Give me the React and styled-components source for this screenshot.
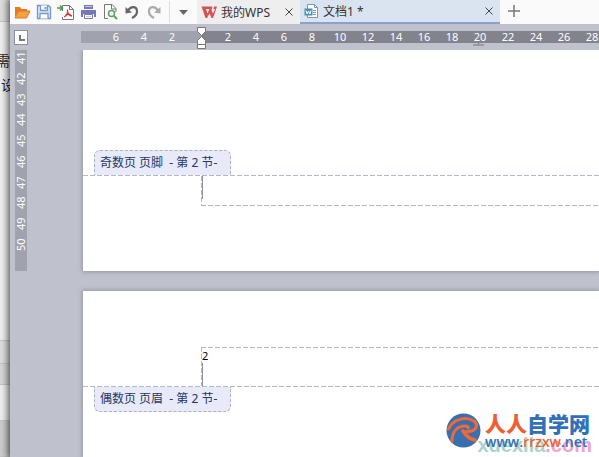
import React from "react";
import styled, { createGlobalStyle } from "styled-components";

const GlobalStyle = createGlobalStyle`
* {
  box-sizing: border-box;
}

body {
  margin: 0;
  font-family: "Noto Sans", "Noto Sans CJK SC", sans-serif;
  font-size: 12px;
  color: #333;
}

button {
  margin: 0;
  padding: 0;
  border: 0;
  background: none;
  font: inherit;
  color: inherit;
}
`;

const dash = direction => `repeating-linear-gradient(
  ${direction}, #b0b9c4 0 5px, transparent 5px 7px
)`;

const Desktop = styled.div`
  position: relative;
  display: flex;
  min-height: 100vh;
  overflow: hidden;
`;

const Behind = styled.div`
  display: flex;
  flex-direction: column;
  flex: 0 0 10px;
  overflow: hidden;
  background: #eee;
`;

const BehindBlock = styled.div`
  flex: ${props => props.$height ? `0 0 ${props.$height}px` : "1"};
  background: ${props => props.$color};
  border-bottom: 1px solid ${props => props.$line || "#c4c4c4"};
`;

const BehindText = styled.div`
  height: 24px;
  padding-left: ${props => props.$indent || 0}px;
  font-size: 14px;
  line-height: 24px;
  white-space: nowrap;
  color: #222;
  direction: ${props => props.$indent ? "ltr" : "rtl"};
`;

const Window = styled.div`
  position: relative;
  display: flex;
  flex-direction: column;
  flex: 1;
  min-width: 0;
  background: #bfc1cc;
  box-shadow: 0 0 7px 2px rgba(0, 0, 0, 0.65);
`;

const TopBar = styled.header`
  display: flex;
  height: 24px;
  overflow: hidden;
  background: #fafafa;
`;

const Tools = styled.div`
  display: flex;
  align-items: center;
  padding-left: 1px;
`;

const ToolButton = styled.button`
  display: flex;
  align-items: center;
  justify-content: center;
  width: 22px;
  height: 22px;
`;

const Divider = styled.div`
  width: 1px;
  height: 22px;
  margin-left: 4px;
  background: #ddd;
`;

const Tab = styled.div`
  display: flex;
  align-items: center;
  width: ${props => props.$active ? 200 : 103}px;
  padding: 0 4px;
  background: ${props => props.$active ? "#dae4f1" : "#eee"};
  border-bottom: ${props => props.$active ? "2px solid #87a3cd" : "0"};
`;

const TabTitle = styled.button`
  display: flex;
  align-items: center;
  flex: 1;
  gap: 4px;
  height: 22px;
  white-space: nowrap;
`;

const IconButton = styled.button`
  display: flex;
  align-items: center;
  justify-content: center;
  width: ${props => props.$wide ? 27 : 14}px;
  height: 22px;
`;

const RulerRow = styled.div`
  position: relative;
  display: flex;
  align-items: center;
  height: 26px;
`;

const CornerButton = styled.button`
  flex: none;
  width: 14px;
  height: 15px;
  margin: 0 53px 0 4px;
  border: 1px solid #8c8e98;
  background: #fff;
`;

const Ruler = styled.div`
  display: flex;
  flex: 1;
  height: 12px;
  overflow: hidden;
  background: #83838e;
  color: #fff;
  font-size: 11px;
  line-height: 12px;
`;

const RulerPart = styled.div`
  display: flex;
  flex: none;
  padding: ${props => props.$margin ? "0 15px 0 21px" : "0 0 0 13px"};
  background: ${props => props.$margin ? "#a0a2ad" : "#83838e"};
`;

const RulerNumber = styled.span`
  width: 28px;
  text-align: center;
`;

const Indent = styled.svg`
  position: absolute;
  left: 186px;
  top: 3px;
`;

const TabStop = styled.svg`
  position: absolute;
  left: 463px;
  top: 19px;
`;

const Workspace = styled.div`
  display: flex;
  flex: 1;
`;

const SideRuler = styled.div`
  display: flex;
  flex-direction: column;
  justify-content: space-between;
  flex: 0 0 12px;
  height: 221px;
  margin-left: 5px;
  padding: 2px 0 20px;
  background: #a0a2ad;
  color: #fff;
  font-size: 11px;
`;

const SideNumber = styled.span`
  display: flex;
  justify-content: center;
  width: 12px;
  height: 12px;
  line-height: 12px;
  writing-mode: vertical-rl;
  transform: rotate(180deg);
`;

const Pages = styled.main`
  display: flex;
  flex-direction: column;
  flex: 1;
  gap: 20px;
  min-width: 0;
  padding-left: 56px;
  overflow: hidden;
`;

const Page = styled.section`
  flex: ${props => props.$last ? "1 0 166px" : "0 0 221px"};
  padding-top: ${props => props.$last ? 56 : 100}px;
  background: #fff;
  box-shadow: 0 0 4px 1px #94969f;
`;

const SectionTag = styled.div`
  width: 137px;
  height: 25px;
  margin-left: 11px;
  padding-left: 5px;
  line-height: 24px;
  white-space: pre;
  color: #1f3864;
  background: #e8e9f9;
  border: 1px dashed #a9b3be;
  ${props => props.$bottom
    ? "border-top: 0; border-radius: 0 0 6px 6px;"
    : "border-bottom: 0; border-radius: 6px 6px 0 0;"}
`;

const Rule = styled.div`
  height: 1px;
  background: ${dash("to right")};
`;

const EditBox = styled.div`
  height: ${props => props.$top ? 39 : 30}px;
  margin-left: 118px;
  padding-left: 1px;
  line-height: 15px;
  font-size: 11px;
  color: #000;
  background:
    ${dash("to right")} left ${props => props.$top ? "top" : "bottom"} / 100% 1px no-repeat,
    ${dash("to bottom")} left top / 1px 100% no-repeat;

  p {
    height: 16px;
    margin: 0;
    padding-top: 1px;
  }
`;

const Caret = styled.div`
  width: 1px;
  height: 23px;
  background: #8d929e;
`;

const Watermark = styled.a`
  position: absolute;
  right: 9px;
  bottom: 0;
  display: flex;
  align-items: flex-start;
  gap: 4px;
  height: 44px;
  text-decoration: none;
`;

const Brand = styled.div`
  position: relative;
  color: #3070b8;
  white-space: nowrap;
`;

const BrandName = styled.div`
  height: 20px;
  font: 900 21px/20px "Noto Sans CJK SC", sans-serif;
`;

const BrandUrl = styled.div`
  position: relative;
  font: 600 14px/18px "Open Sans", sans-serif;
`;

const Ghost = styled.div`
  position: absolute;
  right: -2px;
  top: 20px;
  font: bold 20px/24px "Liberation Sans", sans-serif;
  color: #a9d3cb;
`;

const Tint = styled.span`
  color: ${props => props.$color};
`;

const FolderIcon = () => (
  <svg width="18" height="18" viewBox="0 0 18 18">
    <path d="M2 14V4h5l1.500 2H14v2H6z" fill="#e37d20" />
    <path d="M2 15l3.500-7H17l-3.500 7z" fill="#f5a142" stroke="#df7920" />
  </svg>
);

const SaveIcon = () => (
  <svg width="16" height="18" viewBox="0 0 16 18" fill="none" stroke="#7299c7">
    <path d="M1.500 2.500h11l2 2v11h-13z" fill="#dce8f5" strokeWidth="1.300" />
    <path d="M4.500 2.500v5h7v-5M4 15.500v-5h8v5" fill="#fff" strokeWidth="1.300" />
    <path d="M9.500 4v2" strokeWidth="2" />
  </svg>
);

const PdfIcon = () => (
  <svg width="18" height="18" viewBox="0 0 18 18" fill="none">
    <path d="M5.500 8V2.500h7l4 4v10h-11V14M12.500 2.500v4h4" stroke="#777" fill="#fff" />
    <path d="M10.500 6.500v2.500c0 2-1.500 4-3.500 5M10.500 9c.5 2 2 3.500 4.500 4M8.500 12c1.500-1 3-1 5-.5" stroke="#d43b3b" strokeWidth="1.300" />
    <path d="M0 5h5M3 2.500L5.500 5 3 7.500" stroke="#4a9b55" strokeWidth="1.500" />
  </svg>
);

const PrintIcon = () => (
  <svg width="17" height="18" viewBox="0 0 17 18">
    <path d="M4 2h9v4H4zM1 7h15v7h-2v-3H3v3H1z" fill="#7777b5" />
    <path d="M4.500 11.500h8v4h-8z" fill="#fff" stroke="#7777b5" />
    <path d="M5 3.500h7M6 13.500h5" stroke="#c9c9e6" />
  </svg>
);

const PreviewIcon = () => (
  <svg width="16" height="18" viewBox="0 0 16 18" fill="none">
    <path d="M6 15.500H2.500v-14h7.500l4 4V9M9.500 1.500V6H14" stroke="#777" />
    <circle cx="9.500" cy="10.500" r="3" stroke="#59a35d" strokeWidth="1.500" />
    <path d="M12 13l3 3" stroke="#59a35d" strokeWidth="2" />
  </svg>
);

const TurnIcon = ({ color, flip }) => (
  <svg width="16" height="18" viewBox="0 0 16 18">
    <g transform={flip ? "translate(16 0) scale(-1 1)" : undefined}>
      <path d="M4 7.500C7 2.500 13 3 13 8.500c0 3-2 5-5 6.500" fill="none" stroke={color} strokeWidth="2.200" />
      <path d="M1.500 4v6.500l6.500-1z" fill={color} />
    </g>
  </svg>
);

const WpsIcon = () => (
  <svg width="16" height="14" viewBox="0 0 16 14">
    <path d="M.5 1.500h9L8.500 4H5l1.500 4.500L9.500 1.500h2L10.500 5l1.500 3.500 2-4.500h-1.500l.5-2.500h3L12 13h-1.500L8.500 8.500 6 13H4.500z" fill="#d65257" />
  </svg>
);

const DocIcon = () => (
  <svg width="15" height="16" viewBox="0 0 15 16" fill="none">
    <path d="M3.500 1.500h7l3 3v10h-10z" fill="#fff" stroke="#7c98ad" />
    <path d="M10.500 1.500v3h3M9 7.500h3M9 9.500h3M9 11.500h3" stroke="#7c98ad" />
    <path d="M.5 5.500h8v7h-8z" fill="#4a8fb8" />
    <path d="M2 7.500l1 3.500 1.500-3L6 11l1-3.500" stroke="#fff" />
  </svg>
);

const CloseIcon = () => (
  <svg width="8" height="8" viewBox="0 0 8 8">
    <path d="M.5.5l7 7M7.500.5l-7 7" stroke="#444" />
  </svg>
);

const BrandIcon = () => (
  <svg width="35" height="35" viewBox="0 0 35 35" fill="none" strokeLinecap="round">
    <circle cx="17.500" cy="17.500" r="17" fill="#3a6fae" />
    <path d="M2.500 16C7 6 20 3 28 8c5 4 2 9-3 10-3 1-6 1-8 0" stroke="#ef6939" strokeWidth="3" />
    <path d="M6 28c0-9 5-15 13-15 3 0 4 1 3 2" stroke="#ef6939" strokeWidth="3" />
    <path d="M17 18c3 5 7 8 12 9" stroke="#ef6939" strokeWidth="3.500" />
  </svg>
);

const tools = [
  { label: "打开", icon: <FolderIcon /> },
  { label: "保存", icon: <SaveIcon /> },
  { label: "输出为PDF", icon: <PdfIcon /> },
  { label: "打印", icon: <PrintIcon /> },
  { label: "打印预览", icon: <PreviewIcon /> },
  { label: "撤销", icon: <TurnIcon color="#666" /> },
  { label: "恢复", icon: <TurnIcon color="#aaa" flip /> },
];

const marginNumbers = [6, 4, 2];
const bodyNumbers = Array.from({ length: 14 }, (_, i) => (i + 1) * 2);
const sideNumbers = Array.from({ length: 10 }, (_, i) => i + 41);

const App = () => (
  <Desktop>
    <GlobalStyle />
    <Behind>
      <BehindBlock $height={22} $color="#ddd" />
      <BehindBlock $height={27} $color="#eee" $line="#eee" />
      <BehindText>需</BehindText>
      <BehindText $indent={1}>设</BehindText>
      <BehindBlock $height={244} $color="#eee" />
      <BehindBlock $height={23} $color="#ddd" />
      <BehindBlock $height={21} $color="#d6d6d6" />
      <BehindBlock $height={36} $color="#eee" />
      <BehindBlock $color="#ccc" />
    </Behind>
    <Window>
      <TopBar>
        <Tools>
          {tools.map(t => (
            <ToolButton key={t.label} aria-label={t.label}>{t.icon}</ToolButton>
          ))}
          <Divider />
          <IconButton $wide aria-label="更多">
            <svg width="9" height="5" viewBox="0 0 9 5">
              <path d="M0 0h9L4.500 5z" fill="#666" />
            </svg>
          </IconButton>
        </Tools>
        <Tab>
          <TabTitle><WpsIcon />我的WPS</TabTitle>
          <IconButton aria-label="关闭"><CloseIcon /></IconButton>
        </Tab>
        <Tab $active>
          <TabTitle><DocIcon />文档1 *</TabTitle>
          <IconButton aria-label="关闭"><CloseIcon /></IconButton>
        </Tab>
        <IconButton $wide aria-label="新建">
          <svg width="12" height="12" viewBox="0 0 12 12">
            <path d="M6 0v12M0 6h12" stroke="#777" strokeWidth="1.500" />
          </svg>
        </IconButton>
      </TopBar>
      <RulerRow>
        <CornerButton aria-label="制表符">
          <svg width="12" height="13" viewBox="0 0 12 13" display="block">
            <path d="M5 4v5h5" fill="none" stroke="#777" strokeWidth="2" />
          </svg>
        </CornerButton>
        <Ruler>
          <RulerPart $margin>
            {marginNumbers.map(n => <RulerNumber key={n}>{n}</RulerNumber>)}
          </RulerPart>
          <RulerPart>
            {bodyNumbers.map(n => <RulerNumber key={n}>{n}</RulerNumber>)}
          </RulerPart>
        </Ruler>
        <Indent width="11" height="23" viewBox="0 0 11 23">
          <path d="M1.500.5h8v4l-4 4-4-4zM1.500 17.500v-4l4-4 4 4v4zM1.500 17.500h8v4h-8z" fill="#fff" stroke="#777" />
        </Indent>
        <TabStop width="11" height="4" viewBox="0 0 11 4">
          <path d="M0 2h11M5.500 0v3" stroke="#8d8d94" strokeWidth="1.500" />
        </TabStop>
      </RulerRow>
      <Workspace>
        <SideRuler>
          {sideNumbers.map(n => <SideNumber key={n}>{n}</SideNumber>)}
        </SideRuler>
        <Pages>
          <Page>
            <SectionTag>奇数页 页脚  - 第 2 节-</SectionTag>
            <Rule />
            <EditBox>
              <Caret />
            </EditBox>
          </Page>
          <Page $last>
            <EditBox $top>
              <p>2</p>
              <Caret />
            </EditBox>
            <Rule />
            <SectionTag $bottom>偶数页 页眉  - 第 2 节-</SectionTag>
          </Page>
        </Pages>
      </Workspace>
    </Window>
    <Watermark href="#">
      <BrandIcon />
      <Brand>
        <Ghost>xuexila<Tint $color="#efa3cf">.com</Tint></Ghost>
        <BrandName><Tint $color="#ef5f35">人人</Tint>自学网</BrandName>
        <BrandUrl>www.<Tint $color="#ef5f35">rrzxw</Tint>.net</BrandUrl>
      </Brand>
    </Watermark>
  </Desktop>
);

export default App;
